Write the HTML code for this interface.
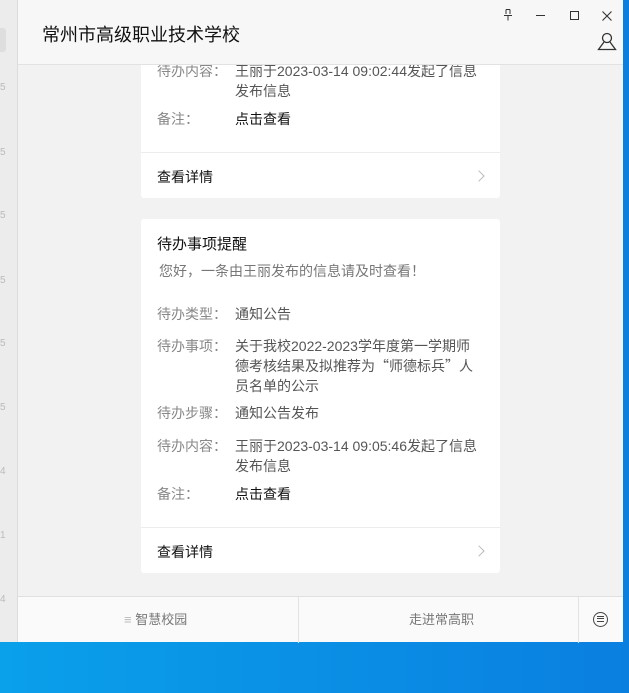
<!DOCTYPE html><html><head><meta charset="utf-8"><style>
*{margin:0;padding:0;box-sizing:border-box}
body{width:629px;height:693px;overflow:hidden;position:relative;background:linear-gradient(90deg,#0aa0ea,#0a7fe0);font-family:"Liberation Sans","Noto Sans CJK SC",sans-serif;font-size:14px}
.win{position:absolute;left:0;top:0;width:623px;height:642px;background:#f2f2f2}
.left{position:absolute;left:0;top:0;width:18px;height:642px;background:#ececec;border-right:1px solid #dcdcdc}
.left span{position:absolute;left:0;color:#bbb;font-size:10px}
.title{position:absolute;left:18px;top:0;width:605px;height:65px;background:#f7f7f7;border-bottom:1px solid #e2e2e2}
.t{position:absolute;left:24px;top:21px;font-size:18px;color:#111}
.card{position:absolute;left:141px;width:359px;background:#fff;border-radius:3px}
.a{position:absolute;white-space:nowrap;line-height:20px}
.l{color:#888;left:16px}
.v{color:#555;left:94px}
.b{color:#111}
.q{font-family:"Noto Sans CJK SC",sans-serif}
.hr{position:absolute;left:0;right:0;height:1px;background:#ececec}
.chev{position:absolute;right:17px;width:8px;height:8px;border-top:1.3px solid #bbb;border-right:1.3px solid #bbb;transform:rotate(45deg)}
.bot{position:absolute;left:18px;top:596px;width:605px;height:46px;background:#fafafa;border-top:1px solid #e0e0e0;color:#777;font-size:13px}
</style></head><body>
<div class="win">
<div class="left"><span style="top:82px">5</span><span style="top:147px">5</span><span style="top:210px">5</span><span style="top:275px">5</span><span style="top:338px">5</span><span style="top:402px">5</span><span style="top:466px">4</span><span style="top:530px">1</span><span style="top:594px">4</span><div style="position:absolute;left:0;top:28px;width:6px;height:24px;background:#dedede;border-radius:0 3px 3px 0"></div></div>
<div class="card" style="top:40px;height:158px">
<div class="a l" style="top:21px">待办内容：</div>
<div class="a v" style="top:21px">王丽于2023-03-14 09:02:44发起了信息<br>发布信息</div>
<div class="a l" style="top:69px">备注：</div>
<div class="a v b" style="top:69px">点击查看</div>
<div class="hr" style="top:112px"></div>
<div class="a b" style="left:16px;top:127px">查看详情</div>
<div class="chev" style="top:132px"></div>
</div>
<div class="card" style="top:219px;height:354px">
<div class="a b" style="left:16px;top:16px;font-size:15px">待办事项提醒</div>
<div class="a" style="left:18px;top:42px;color:#777">您好，一条由王丽发布的信息请及时查看！</div>
<div class="a l" style="top:85px">待办类型：</div>
<div class="a v" style="top:85px">通知公告</div>
<div class="a l" style="top:117px">待办事项：</div>
<div class="a v" style="top:117px">关于我校2022-2023学年度第一学期师<br>德考核结果及拟推荐为<span class="q">“</span>师德标兵<span class="q">”</span>人<br>员名单的公示</div>
<div class="a l" style="top:184px">待办步骤：</div>
<div class="a v" style="top:184px">通知公告发布</div>
<div class="a l" style="top:217px">待办内容：</div>
<div class="a v" style="top:217px">王丽于2023-03-14 09:05:46发起了信息<br>发布信息</div>
<div class="a l" style="top:265px">备注：</div>
<div class="a v b" style="top:265px">点击查看</div>
<div class="hr" style="top:308px"></div>
<div class="a b" style="left:16px;top:323px">查看详情</div>
<div class="chev" style="top:328px"></div>
</div>
<div class="title"><div class="t">常州市高级职业技术学校</div>
<svg style="position:absolute;left:485px;top:9px" width="10" height="12" viewBox="0 0 10 12" fill="none" stroke="#333" stroke-width="1"><path d="M3 0.5H7M3 0.5V5M7 0.5V5M1 6.5H9M5 6.5V11.5"/></svg>
<div style="position:absolute;left:518px;top:15px;width:9px;height:1px;background:#333"></div>
<div style="position:absolute;left:552px;top:11px;width:9px;height:9px;border:1px solid #333"></div>
<svg style="position:absolute;left:584px;top:11px" width="10" height="10" viewBox="0 0 10 10" stroke="#333" stroke-width="1.1"><path d="M0.5 0.5L9.5 9.5M9.5 0.5L0.5 9.5"/></svg>
<svg style="position:absolute;left:579px;top:32px" width="20" height="20" viewBox="0 0 20 20" fill="none" stroke="#333" stroke-width="1.3"><circle cx="10" cy="6" r="4.5"/><path d="M7 10 L1.5 17.5 H18.5 L13 10"/></svg>
</div>
<div class="bot">
<div class="a" style="left:106px;top:13px"><span style="color:#bbb">≡</span> 智慧校园</div>
<div style="position:absolute;left:280px;top:0;width:1px;height:46px;background:#e2e2e2"></div>
<div class="a" style="left:391px;top:13px">走进常高职</div>
<div style="position:absolute;left:560px;top:0;width:1px;height:46px;background:#e2e2e2"></div>
<div style="position:absolute;left:575px;top:15px;width:15px;height:15px;border:1.3px solid #444;border-radius:50%"></div>
<div style="position:absolute;left:579px;top:19px;width:7px;height:6px;border-top:1px solid #444;border-bottom:1px solid #444"></div>
<div style="position:absolute;left:579px;top:21px;width:7px;height:1px;background:#444"></div>
</div>
</div>
</body></html>
